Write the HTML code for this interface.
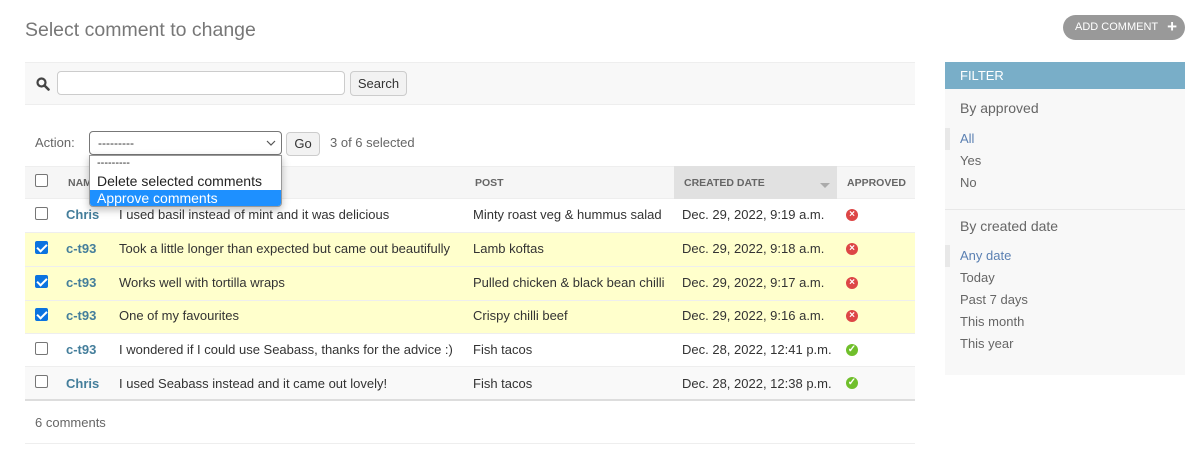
<!DOCTYPE html>
<html><head><style>
*{box-sizing:border-box;margin:0;padding:0}
body{width:1204px;height:456px;background:#fff;font-family:"Liberation Sans",sans-serif;font-size:13px;color:#333;position:relative;overflow:hidden}
.a{position:absolute;white-space:nowrap}
.cb{position:absolute;width:13px;height:13px;border:1px solid #767676;border-radius:2px;background:#fff}
.cb.on{background:#0b73e0;border-color:#0b73e0}
.cb.on:after{content:"";position:absolute;left:3px;top:0px;width:4px;height:8px;border:solid #fff;border-width:0 2px 2px 0;transform:rotate(45deg)}
.row{position:absolute;left:25px;width:890px;border-bottom:1px solid #eee}
.nm{color:#447e9b;font-weight:bold}
.ic{position:absolute;width:12px;height:12px;border-radius:50%;color:#fff;font-size:10px;line-height:12px;text-align:center;font-weight:bold}
.x{background:#dd4646}.ok{background:#70bf2b}
.th{position:absolute;top:177px;font-size:10.5px;font-weight:bold;color:#666}
.fl{position:absolute;left:960px;color:#666}
</style></head><body>
<div class="a" style="left:25px;top:19px;font-size:19.5px;color:#777">Select comment to change</div>
<div class="a" style="left:1063px;top:15px;width:122px;height:25px;background:#999;border-radius:13px;color:#fff;font-size:11px;line-height:25px;padding-left:12px">ADD COMMENT <span style="font-weight:bold;font-size:17px;position:absolute;right:8px;top:-1px">+</span></div>

<div class="a" style="left:25px;top:62px;width:890px;height:43px;background:#f8f8f8;border-top:1px solid #eee;border-bottom:1px solid #eee"></div>
<svg class="a" style="left:36px;top:77px" width="14" height="14" viewBox="0 0 14 14"><circle cx="5.5" cy="5.5" r="4" fill="none" stroke="#444" stroke-width="2.2"/><path d="M8.5 8.5L12.5 12.5" stroke="#444" stroke-width="2.6" stroke-linecap="round"/></svg>
<div class="a" style="left:57px;top:71px;width:288px;height:24px;border:1px solid #ccc;border-radius:4px;background:#fff"></div>
<div class="a" style="left:350px;top:71px;width:57px;height:25px;border:1px solid #ccc;border-radius:4px;background:#f2f2f2;line-height:23px;text-align:center">Search</div>

<div class="a" style="left:35px;top:135px;color:#666">Action:</div>
<div class="a" style="left:89px;top:131px;width:193px;height:24px;border:1px solid #777;border-radius:4px;background:#fff;font-size:12px;line-height:22px;padding-left:8px">---------<svg style="position:absolute;right:5px;top:8px" width="10" height="7"><path d="M1 1L5 5L9 1" fill="none" stroke="#555" stroke-width="1.2"/></svg></div>
<div class="a" style="left:286px;top:132px;width:34px;height:24px;border:1px solid #ccc;border-radius:4px;background:#f2f2f2;line-height:22px;text-align:center">Go</div>
<div class="a" style="left:330px;top:135px;color:#666">3 of 6 selected</div>

<div class="a" style="left:25px;top:166px;width:890px;height:33px;background:#f6f6f6;border-top:1px solid #eee;border-bottom:1px solid #eee"></div>
<div class="a" style="left:674px;top:166px;width:163px;height:33px;background:#e1e1e1"></div>
<div class="cb" style="left:35px;top:174px"></div>
<div class="th" style="left:68px">NAME</div>
<div class="th" style="left:475px">POST</div>
<div class="th" style="left:684px">CREATED DATE</div>
<div class="a" style="left:820px;top:183px;width:0;height:0;border-left:5px solid transparent;border-right:5px solid transparent;border-top:5px solid #aaa"></div>
<div class="th" style="left:847px">APPROVED</div>

<div class="row" style="top:199px;height:34px;background:#fff"></div>
<div class="row" style="top:233px;height:34px;background:#ffc"></div>
<div class="row" style="top:267px;height:34px;background:#ffc"></div>
<div class="row" style="top:301px;height:33px;background:#ffc"></div>
<div class="row" style="top:334px;height:33px;background:#fff"></div>
<div class="row" style="top:367px;height:34px;background:#f9f9f9;border-bottom:2px solid #ddd"></div>

<div class="cb" style="left:35px;top:207px"></div><div class="a nm" style="left:66px;top:207px">Chris</div><div class="a" style="left:119px;top:207px">I used basil instead of mint and it was delicious</div><div class="a" style="left:473px;top:207px">Minty roast veg &amp; hummus salad</div><div class="a" style="left:682px;top:207px">Dec. 29, 2022, 9:19 a.m.</div><div class="ic x" style="left:846px;top:209px">×</div>
<div class="cb on" style="left:35px;top:241px"></div><div class="a nm" style="left:66px;top:241px">c-t93</div><div class="a" style="left:119px;top:241px">Took a little longer than expected but came out beautifully</div><div class="a" style="left:473px;top:241px">Lamb koftas</div><div class="a" style="left:682px;top:241px">Dec. 29, 2022, 9:18 a.m.</div><div class="ic x" style="left:846px;top:243px">×</div>
<div class="cb on" style="left:35px;top:275px"></div><div class="a nm" style="left:66px;top:275px">c-t93</div><div class="a" style="left:119px;top:275px">Works well with tortilla wraps</div><div class="a" style="left:473px;top:275px">Pulled chicken &amp; black bean chilli</div><div class="a" style="left:682px;top:275px">Dec. 29, 2022, 9:17 a.m.</div><div class="ic x" style="left:846px;top:277px">×</div>
<div class="cb on" style="left:35px;top:308px"></div><div class="a nm" style="left:66px;top:308px">c-t93</div><div class="a" style="left:119px;top:308px">One of my favourites</div><div class="a" style="left:473px;top:308px">Crispy chilli beef</div><div class="a" style="left:682px;top:308px">Dec. 29, 2022, 9:16 a.m.</div><div class="ic x" style="left:846px;top:310px">×</div>
<div class="cb" style="left:35px;top:342px"></div><div class="a nm" style="left:66px;top:342px">c-t93</div><div class="a" style="left:119px;top:342px">I wondered if I could use Seabass, thanks for the advice :)</div><div class="a" style="left:473px;top:342px">Fish tacos</div><div class="a" style="left:682px;top:342px">Dec. 28, 2022, 12:41 p.m.</div><div class="ic ok" style="left:846px;top:344px">✓</div>
<div class="cb" style="left:35px;top:375px"></div><div class="a nm" style="left:66px;top:376px">Chris</div><div class="a" style="left:119px;top:376px">I used Seabass instead and it came out lovely!</div><div class="a" style="left:473px;top:376px">Fish tacos</div><div class="a" style="left:682px;top:376px">Dec. 28, 2022, 12:38 p.m.</div><div class="ic ok" style="left:846px;top:377px">✓</div>

<div class="a" style="left:35px;top:415px;color:#666">6 comments</div>
<div class="a" style="left:25px;top:443px;width:890px;height:1px;background:#eee"></div>

<div class="a" style="left:89px;top:155px;width:193px;height:52px;background:#fff;border:1px solid #999;border-radius:0 0 4px 4px;box-shadow:0 3px 8px rgba(0,0,0,.25);overflow:hidden;color:#222">
<div style="font-size:11px;padding-left:7px;height:16px;line-height:14px">---------</div>
<div style="font-size:14px;padding-left:7px;height:18px;line-height:18px">Delete selected comments</div>
<div style="font-size:14px;padding-left:7px;height:18px;line-height:17px;background:#1e90ff;color:#fff">Approve comments</div>
</div>

<div class="a" style="left:945px;top:62px;width:240px;height:313px;background:#f8f8f8"></div>
<div class="a" style="left:945px;top:62px;width:240px;height:27px;background:#79aec8;color:#fff;font-size:13px;line-height:27px;padding-left:15px">FILTER</div>
<div class="fl" style="top:100px;font-size:14px">By approved</div>
<div class="a" style="left:945px;top:128px;width:5px;height:22px;background:#e8e8e8"></div>
<div class="fl" style="top:131px;color:#5b80b2">All</div>
<div class="fl" style="top:153px">Yes</div>
<div class="fl" style="top:175px">No</div>
<div class="a" style="left:945px;top:209px;width:240px;height:1px;background:#e8e8e8"></div>
<div class="fl" style="top:218px;font-size:14px">By created date</div>
<div class="a" style="left:945px;top:245px;width:5px;height:22px;background:#e8e8e8"></div>
<div class="fl" style="top:248px;color:#5b80b2">Any date</div>
<div class="fl" style="top:270px">Today</div>
<div class="fl" style="top:292px">Past 7 days</div>
<div class="fl" style="top:314px">This month</div>
<div class="fl" style="top:336px">This year</div>
</body></html>
